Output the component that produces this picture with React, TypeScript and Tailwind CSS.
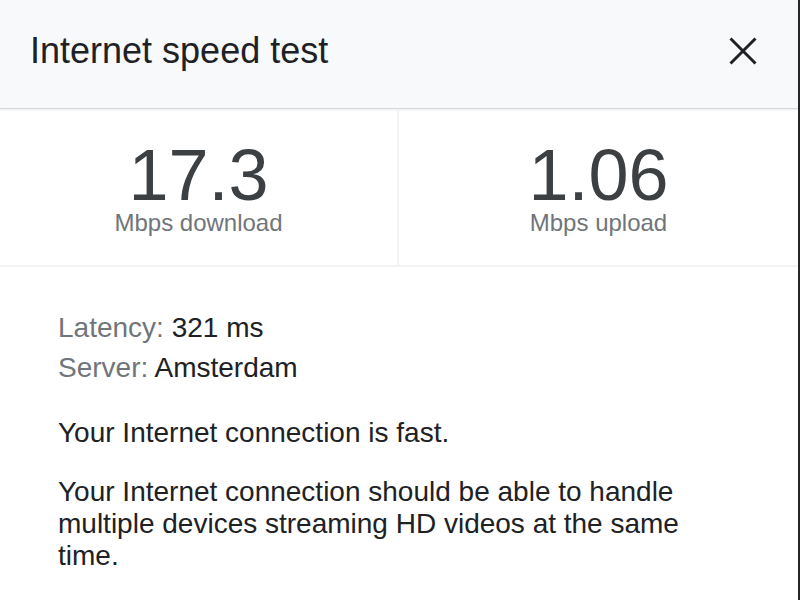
import { useState } from "react";

const stats = [
  { value: "17.3", label: "Mbps download" },
  { value: "1.06", label: "Mbps upload" },
];

const CloseIcon = () => (
  <svg width="28" height="28" viewBox="0 0 28 28" fill="none" aria-hidden="true">
    <path d="M1.5 1.5L26.5 26.5M26.5 1.5L1.5 26.5" stroke="#202124" strokeWidth="3" />
  </svg>
);

export default function App() {
  const [open, setOpen] = useState(true);

  return (
    <div className="w-[800px] h-[600px] overflow-hidden bg-white border-r-2 border-[#262626] text-[#202124] font-['Liberation_Sans',Arial,sans-serif]">
      {/* Header */}
      <div className="h-[109px] flex items-center justify-between pl-[30px] pr-[41px] pb-[6px] bg-[#f8f9fa] border-b border-[#d6d8da] shadow-[0_1px_2px_rgba(0,0,0,0.08)]">
        <h1 className="text-[36px] leading-none">Internet speed test</h1>
        <button onClick={() => setOpen(!open)} className="flex items-center justify-center">
          <CloseIcon />
        </button>
      </div>

      {/* Results */}
      <div className="grid grid-cols-2 border-b-2 border-[#f3f3f3]">
        {stats.map((s, i) => (
          <div
            key={s.label}
            className={
              i === 0
                ? "h-[156px] flex flex-col items-center pt-[30px] border-r-2 border-[#f3f3f3]"
                : "h-[156px] flex flex-col items-center pt-[30px]"
            }
          >
            <div className="text-[72px] leading-none text-[#3c4043]">{s.value}</div>
            <div className="text-[24px] leading-none text-[#70757a]">{s.label}</div>
          </div>
        ))}
      </div>

      {/* Details */}
      <div className="pl-[58px] pr-[80px] pt-[41px] text-[28px]">
        <div className="leading-[40px]">
          <span className="text-[#70757a]">Latency:</span> 321 ms
        </div>
        <div className="leading-[40px]">
          <span className="text-[#70757a]">Server:</span> Amsterdam
        </div>
        <p className="leading-[32px] mt-[29px]">Your Internet connection is fast.</p>
        <p className="leading-[32px] mt-[27px]">
          Your Internet connection should be able to handle multiple devices streaming HD videos at the same time.
        </p>
      </div>
    </div>
  );
}
